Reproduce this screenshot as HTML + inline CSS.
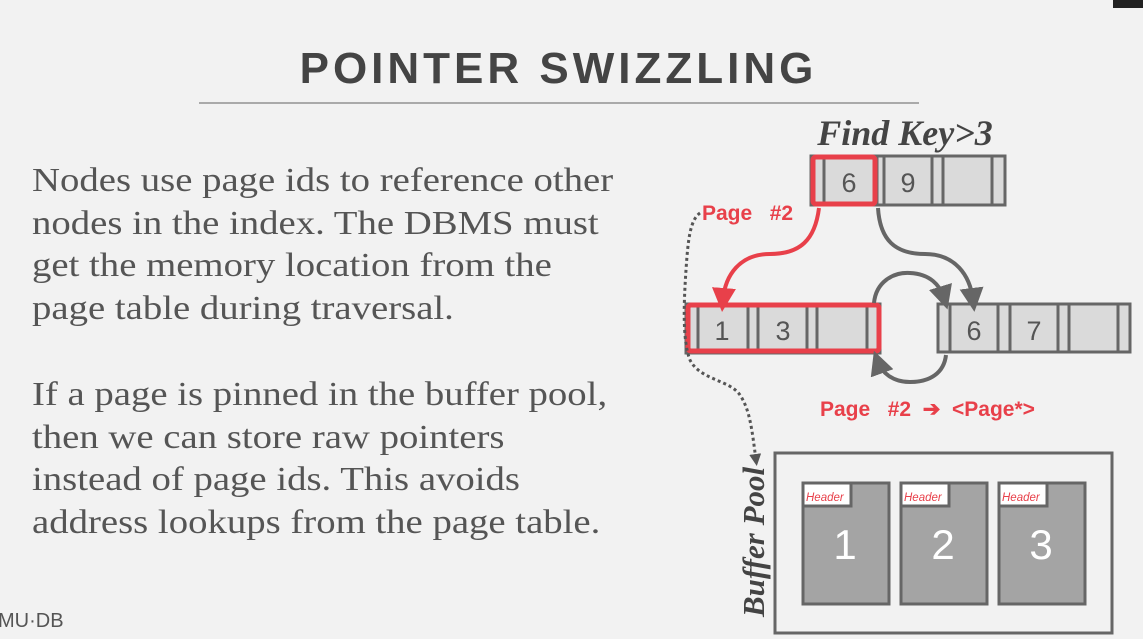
<!DOCTYPE html>
<html><head><meta charset="utf-8"><style>
body{margin:0;width:1143px;height:639px;overflow:hidden;background:#f2f2f2;position:relative;font-family:"Liberation Sans",sans-serif}
.title{position:absolute;left:0;width:1117px;top:44px;text-align:center;font-size:44px;font-weight:bold;letter-spacing:4px;color:#444}
.rule{position:absolute;left:199px;top:102px;width:720px;height:2px;background:#aaa}
.body{position:absolute;left:32px;font-family:"Liberation Serif",serif;font-size:34px;line-height:42.7px;color:#555;transform:scaleX(1.14);transform-origin:left top;white-space:nowrap}
</style></head><body>
<div class="title">POINTER SWIZZLING</div>
<div class="rule"></div>
<div class="body" style="top:160px">Nodes use page ids to reference other<br>nodes in the index. The DBMS must<br>get the memory location from the<br>page table during traversal.</div>
<div class="body" style="top:374px">If a page is pinned in the buffer pool,<br>then we can store raw pointers<br>instead of page ids. This avoids<br>address lookups from the page table.</div>
<div style="position:absolute;left:-2px;top:610px;font-size:20px;color:#555">MU·DB</div>
<div style="position:absolute;right:0;top:0;width:30px;height:8px;background:#222"></div>
<svg width="1143" height="639" style="position:absolute;left:0;top:0" font-family="Liberation Sans, sans-serif">
<defs>
<marker id="ag" markerWidth="6" markerHeight="6" refX="3" refY="3" orient="auto" markerUnits="strokeWidth"><path d="M0,0L6,3L0,6Z" fill="#666"/></marker>
<marker id="ar" markerWidth="6" markerHeight="6" refX="3" refY="3" orient="auto" markerUnits="strokeWidth"><path d="M0,0L6,3L0,6Z" fill="#e8404a"/></marker>
<marker id="ad" markerWidth="4" markerHeight="4" refX="2" refY="2" orient="auto" markerUnits="strokeWidth"><path d="M0,0L4,2L0,4Z" fill="#555"/></marker>
</defs>
<text x="905" y="145" text-anchor="middle" font-family="Liberation Serif,serif" font-style="italic" font-weight="bold" font-size="36" fill="#444">Find Key&gt;3</text>
<g stroke="#666" stroke-width="3" fill="#dadada">
<rect x="811" y="156" width="194" height="49"/>
<rect x="686" y="304" width="194" height="49"/>
<rect x="938" y="304" width="192" height="48"/>
</g>
<g stroke="#666" stroke-width="3">
<path d="M824 156V205M877 156V205M884 156V205M932 156V205M943 156V205M992 156V205"/>
<path d="M698 304V353M748 304V353M758 304V353M807 304V353M817 304V353M867 304V353"/>
<path d="M950 304V352M998 304V352M1010 304V352M1058 304V352M1069 304V352M1118 304V352"/>
</g>
<g font-size="27" fill="#555" text-anchor="middle">
<text x="849" y="192">6</text><text x="908" y="192">9</text>
<text x="722" y="340">1</text><text x="783" y="340">3</text>
<text x="974" y="340">6</text><text x="1034" y="340">7</text>
</g>
<rect x="813" y="157" width="62" height="47" rx="3" fill="none" stroke="#e8404a" stroke-width="5"/>
<rect x="688" y="305" width="191" height="46" rx="3" fill="none" stroke="#e8404a" stroke-width="5"/>
<path d="M819 208C815 240 800 254 770 254C740 254 725 275 723 300" fill="none" stroke="#e8404a" stroke-width="4" marker-end="url(#ar)"/>
<path d="M878 208C880 240 895 254 925 254C955 254 970 275 973 300" fill="none" stroke="#666" stroke-width="4" marker-end="url(#ag)"/>
<path d="M874 303C876 282 893 272 910 273C930 274 940 285 944 298" fill="none" stroke="#666" stroke-width="4" marker-end="url(#ag)"/>
<path d="M946 355C944 373 930 382 910 382C893 382 882 373 878 362" fill="none" stroke="#666" stroke-width="4" marker-end="url(#ag)"/>
<text x="702" y="220" font-size="21" font-weight="bold" fill="#e8404a" xml:space="preserve">Page   #2</text>
<text x="820" y="416" font-size="21" font-weight="bold" fill="#e8404a" xml:space="preserve">Page   #2  ➔  &lt;Page*&gt;</text>
<path d="M700 213C690 220 688 240 686 270C684 300 682 340 690 360C700 380 730 380 740 395C750 410 752 430 756 460" fill="none" stroke="#555" stroke-width="3" stroke-dasharray="3 3" marker-end="url(#ad)"/>
<text transform="translate(764,617) rotate(-90)" font-family="Liberation Serif,serif" font-style="italic" font-weight="bold" font-size="31" fill="#444">Buffer Pool</text>
<rect x="775" y="453" width="337" height="180" fill="none" stroke="#666" stroke-width="3"/>
<g stroke="#666" stroke-width="3">
<rect x="803" y="483" width="86" height="121" fill="#a4a4a4"/>
<rect x="901" y="483" width="86" height="121" fill="#a4a4a4"/>
<rect x="999" y="483" width="86" height="121" fill="#a4a4a4"/>
<rect x="803" y="483" width="48" height="23" fill="#fff"/>
<rect x="901" y="483" width="48" height="23" fill="#fff"/>
<rect x="999" y="483" width="48" height="23" fill="#fff"/>
</g>
<g font-size="11.5" font-style="italic" fill="#e8404a">
<text x="806" y="501">Header</text><text x="904" y="501">Header</text><text x="1002" y="501">Header</text>
</g>
<g font-size="42" fill="#fff" text-anchor="middle">
<text x="845" y="559">1</text><text x="943" y="559">2</text><text x="1041" y="559">3</text>
</g>
</svg>
</body></html>
